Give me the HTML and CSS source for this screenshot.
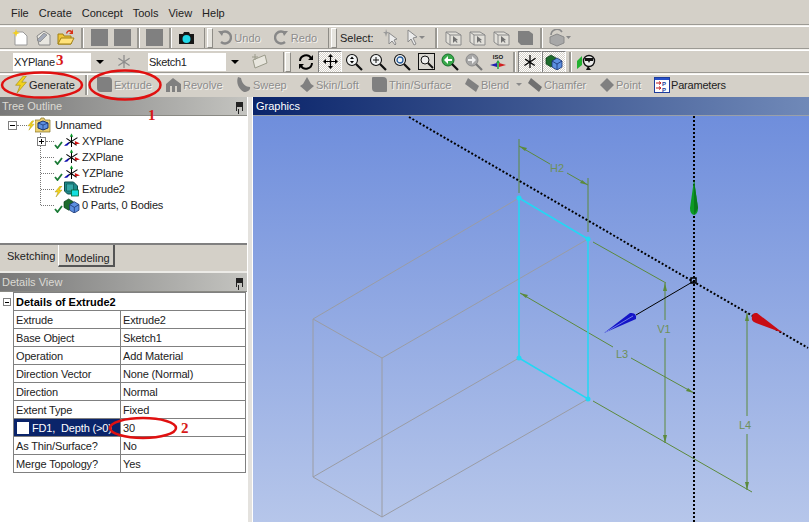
FILE: index.html
```html
<!DOCTYPE html>
<html lang="en">
<head>
<meta charset="utf-8">
<title>DesignModeler</title>
<link rel="stylesheet" href="styles.css">
</head>
<body>
<svg class="defs" width="0" height="0" aria-hidden="true">
  <defs>
    <symbol id="i-axes" viewBox="0 0 20 18">
      <path d="M10 3V16M3 14L17 5M4 6L16 14" stroke="#000" stroke-width="1.2" fill="none"/>
      <path d="M10 0L12 4H8Z" fill="#0a9a2a"/>
      <path d="M14 9L20 12L14 13Z" fill="#d01010"/>
      <path d="M7 10L1 15L6 14Z" fill="#1010c0"/>
    </symbol>
    <symbol id="i-check" viewBox="0 0 9 8">
      <path d="M1 4L3.5 7L8 1" stroke="#1a7a35" stroke-width="1.8" fill="none"/>
    </symbol>
    <symbol id="i-bolt" viewBox="0 0 9 11">
      <path d="M6 0L1 6H4L2 11L8 4H5L8 0Z" fill="#f2d21c" stroke="#a08a10" stroke-width=".4"/>
    </symbol>
    <symbol id="i-cubes" viewBox="0 0 18 16">
      <path d="M1 4L6 1L11 4V10L6 13L1 10Z" fill="#1d6b2c" stroke="#0c3a18" stroke-width=".7"/>
      <path d="M7 7L12 4L17 7V13L12 16L7 13Z" fill="#5c8fe0" stroke="#17306e" stroke-width=".8"/>
      <path d="M7 7L12 10L17 7M12 10V16" stroke="#17306e" stroke-width=".8" fill="none"/>
    </symbol>
    <symbol id="i-extrude" viewBox="0 0 16 16">
      <path d="M1 1H10L14 5V13H4L1 10Z" fill="#1c8a8a" stroke="#0c4a4a"/>
      <path d="M3 3H10V10H3Z" fill="#36a8a8" stroke="#0c4a4a" stroke-width=".6"/>
      <rect x="8" y="9" width="7" height="6" fill="#14e0e0" stroke="#063" stroke-width=".8"/>
    </symbol>
    <symbol id="i-mag" viewBox="0 0 18 18">
      <circle cx="7" cy="7" r="5.5" fill="#f2f4f4" stroke="#111" stroke-width="1.1"/>
      <path d="M11 11L17 17" stroke="#111" stroke-width="2.2"/>
    </symbol>
    <symbol id="box-sel" viewBox="0 0 17 17">
      <path d="M1 3H11L16 6V16H5L1 13Z" fill="#e2e0da" stroke="#8a8a8a"/>
      <path d="M1 3L5 6H16M5 6V16" fill="none" stroke="#8a8a8a"/>
      <path d="M8 7L8 14L10 12L12 14L12.500 13L11 11.500L13 11Z" fill="#707070"/>
    </symbol>
  </defs>
</svg>

<div class="app">
  <nav class="menubar">
    <span class="menu">File</span><span class="menu">Create</span><span class="menu">Concept</span><span class="menu">Tools</span><span class="menu">View</span><span class="menu">Help</span>
  </nav>

  <div class="toolrow row-main">
    <span class="btn"><svg width="16" height="17" viewBox="0 0 16 17"><path d="M3 3H11L15 7V16H3Z" fill="#fff" stroke="#999"/><path d="M4 0L5 3L8 4L5 5L4 8L3 5L0 4L3 3Z" fill="#f4d020"/></svg></span>
    <span class="btn"><svg width="16" height="16" viewBox="0 0 16 16"><path d="M2 6L9 1L15 5V15H4Z" fill="#e8e6e0" stroke="#8a8a8a"/><path d="M2 10L9 3L12 5L5 12Z" fill="#a4aab8" stroke="#777" stroke-width=".6"/></svg></span>
    <span class="btn"><svg width="18" height="17" viewBox="0 0 18 17"><path d="M1 5H6L7 7H14V15H1Z" fill="#f0c638" stroke="#a08014"/><path d="M1 15L4 9H17L14 15Z" fill="#ffe27a" stroke="#a08014"/><path d="M9 4C10 1 13 0 15 2L16 0V5H12L14 3C12 2 11 2 10 5Z" fill="#d83018"/></svg></span>
    <span class="sep w11"></span>
    <span class="btn"><span class="gray-sq"></span></span>
    <span class="btn"><span class="gray-sq"></span></span>
    <span class="sep w9"></span>
    <span class="btn"><span class="gray-sq"></span></span>
    <span class="sep w9"></span>
    <span class="btn"><svg width="17" height="14" viewBox="0 0 17 14"><path d="M1 3H5L6 1H11L12 3H16V13H1Z" fill="#161616"/><circle cx="8.5" cy="8" r="4" fill="#20d8e8"/></svg></span>
    <span class="grip w16"></span>
    <span class="btn w50 dim"><svg width="15" height="15" viewBox="0 0 15 15"><path d="M4 3A6 6 0 1 1 4 12" fill="none" stroke="#888" stroke-width="2.4"/><path d="M1 1L7 1L5 6Z" fill="#888"/></svg><span class="lbl">Undo</span></span>
    <span class="btn w53 ml5 dim"><svg width="15" height="15" viewBox="0 0 15 15"><path d="M11 3A6 6 0 1 0 11 12" fill="none" stroke="#888" stroke-width="2.4"/><path d="M14 1L8 1L10 6Z" fill="#888"/></svg><span class="lbl">Redo</span></span>
    <span class="grip w17"></span>
    <span class="select-label">Select:</span>
    <span class="btn w21"><svg width="16" height="17" viewBox="0 0 16 17"><path d="M6 4L6 15L9 12L12 16L13 15L11 11L14 10Z" fill="#ececec" stroke="#8a8a8a"/><path d="M3 0L4 3L7 3L4 4.500L3 8L2 4.500L0 3L2.500 3Z" fill="#9a9a9a"/></svg></span>
    <span class="btn w30"><svg width="20" height="17" viewBox="0 0 20 17"><path d="M2 1L2 13L5 10L8 16L10 15L7 9L11 8Z" fill="#ececec" stroke="#8a8a8a"/><path d="M13 7H19L16 10Z" fill="#888"/></svg></span>
    <span class="sep w10"></span>
    <span class="btn w24"><svg width="17" height="17" viewBox="0 0 17 17"><use href="#box-sel"/></svg></span>
    <span class="btn w24"><svg width="17" height="17" viewBox="0 0 17 17"><use href="#box-sel"/></svg></span>
    <span class="btn w24"><svg width="17" height="17" viewBox="0 0 17 17"><use href="#box-sel"/></svg></span>
    <span class="btn w24"><svg width="17" height="17" viewBox="0 0 17 17"><path d="M1 2H12L16 5V16H4L1 13Z" fill="#808080"/></svg></span>
    <span class="sep w8"></span>
    <span class="btn w30"><svg width="24" height="18" viewBox="0 0 24 18"><path d="M2 8L9 5L16 8V14L9 17L2 14Z" fill="#a8a8a8" stroke="#8a8a8a"/><path d="M3 6A6 6 0 0 1 14 3" fill="none" stroke="#8a8a8a" stroke-width="1.6"/><path d="M18 7H23L20.500 10Z" fill="#888"/></svg></span>
  </div>

  <div class="toolrow row-view">
    <span class="combo"><span class="combo-text">XYPlane</span><span class="combo-arrow"></span></span>
    <span class="btn w24 ml4 dim"><svg width="16" height="15" viewBox="0 0 20 18"><path d="M10 1V17M3 14L17 5M3 5L17 14" stroke="#8c8c8c" stroke-width="1.6" fill="none"/></svg></span>
    <span class="combo ml12"><span class="combo-text">Sketch1</span><span class="combo-arrow"></span></span>
    <span class="btn w24 ml5"><svg width="16" height="15" viewBox="0 0 16 15"><path d="M1 6L13 1L15 9L3 14Z" fill="#e8e6de" stroke="#9a9a8a"/><path d="M3 0V6M0 3H6" stroke="#9a9a8a"/></svg></span>
    <span class="grip w22"></span>
    <span class="btn w24"><svg width="16" height="16" viewBox="0 0 16 16"><path d="M2 7A6 6 0 0 1 13 4" fill="none" stroke="#000" stroke-width="2"/><path d="M14 9A6 6 0 0 1 3 12" fill="none" stroke="#000" stroke-width="2"/><path d="M15 1V6H10Z M1 15V10H6Z"/></svg></span>
    <span class="btn w24 pressed"><svg width="15" height="15" viewBox="0 0 15 15"><path d="M7.500 2V13M2 7.500H13" stroke="#000" stroke-width="1.200"/><path d="M7.500 0L10 3H5ZM7.500 15L10 12H5ZM0 7.500L3 5V10ZM15 7.500L12 5V10Z"/></svg></span>
    <span class="btn w24"><svg width="18" height="18" viewBox="0 0 18 18"><use href="#i-mag"/><path d="M7 3.500L9 6H5ZM7 10.500L9 8H5Z"/></svg></span>
    <span class="btn w24"><svg width="18" height="18" viewBox="0 0 18 18"><use href="#i-mag"/><path d="M7 4V10M4 7H10" stroke="#111"/></svg></span>
    <span class="btn w24"><svg width="18" height="18" viewBox="0 0 18 18"><use href="#i-mag"/><circle cx="7" cy="7" r="3" fill="none" stroke="#245a9a" stroke-width="1.300"/></svg></span>
    <span class="btn w24"><svg width="17" height="17" viewBox="0 0 17 17"><rect x=".5" y=".5" width="16" height="16" fill="#d8d6d0" stroke="#111"/><circle cx="7" cy="7" r="4" fill="#eee" stroke="#111"/><path d="M10 10L15 15" stroke="#111" stroke-width="1.800"/></svg></span>
    <span class="btn w24"><svg width="18" height="18" viewBox="0 0 18 18"><circle cx="7" cy="7" r="6" fill="#38a84a" stroke="#16702a"/><path d="M11 6H7V3L3 7L7 11V8H11Z" fill="#fff"/><path d="M11 11L17 17" stroke="#111" stroke-width="2.200"/></svg></span>
    <span class="btn w24"><svg width="18" height="18" viewBox="0 0 18 18"><circle cx="7" cy="7" r="6" fill="#a6a6a6" stroke="#8a8a8a"/><path d="M3 6H7V3L11 7L7 11V8H3Z" fill="#eee"/><path d="M11 11L17 17" stroke="#777" stroke-width="2.200"/></svg></span>
    <span class="btn w24"><svg width="18" height="18" viewBox="0 0 18 18"><text x="9" y="6" class="iso">ISO</text><path d="M9 8V16" stroke="#20a040" stroke-width="1.500"/><path d="M1 12L8 10L8 14Z" fill="#2020b0"/><path d="M17 12L10 10L10 14Z" fill="#d02020"/><path d="M9 7L11 10H7Z" fill="#20a040"/></svg></span>
    <span class="sep w8"></span>
    <span class="btn w24 pressed"><svg width="16" height="15" viewBox="0 0 20 18"><path d="M10 1V17M3 14L17 5M4 6L16 14" stroke="#000" stroke-width="1.600" fill="none"/></svg></span>
    <span class="btn w24 pressed"><svg width="18" height="16" viewBox="0 0 18 16"><use href="#i-cubes"/></svg></span>
    <span class="sep w8"></span>
    <span class="btn w24"><svg width="19" height="16" viewBox="0 0 19 16"><path d="M0 7L5 2V11L0 15Z" fill="#22b030"/><circle cx="12" cy="7" r="5.500" fill="#eee" stroke="#111" stroke-width="1.400"/><path d="M8 4H16V7H13L12 9L11 7H8ZM11 12L14 16H9Z" fill="#111"/></svg></span>
  </div>

  <div class="toolrow row-feat">
    <span class="feat f62"><svg width="14" height="17" viewBox="0 0 9 11"><use href="#i-bolt"/></svg><span class="lbl-on">Generate</span></span>
    <span class="sep w21"></span>
    <span class="feat f69 dim"><span class="fi fi-sq"></span><span class="lbl">Extrude</span></span>
    <span class="feat f70 dim"><svg width="15" height="15" viewBox="0 0 15 15"><path d="M0 7L7 1L15 7V15H11V9H9V15H6V9H4V15H0Z" fill="#808080"/></svg><span class="lbl">Revolve</span></span>
    <span class="feat f64 dim"><svg width="15" height="15" viewBox="0 0 15 15"><path d="M2 0C0 5 2 12 8 15C11 15 15 13 14 10C10 10 6 7 5 1Z" fill="#808080"/></svg><span class="lbl">Sweep</span></span>
    <span class="feat f72 dim"><svg width="14" height="15" viewBox="0 0 14 15"><path d="M7 0L11 7L14 9L7 15L0 9L3 7Z" fill="#808080"/></svg><span class="lbl">Skin/Loft</span></span>
    <span class="feat f93 dim"><span class="fi fi-sq"></span><span class="lbl">Thin/Surface</span></span>
    <span class="feat f63 dim"><svg width="14" height="14" viewBox="0 0 14 14"><path d="M3 0L14 8L11 14L0 6Z" fill="#808080"/></svg><span class="lbl">Blend</span><span class="mini-arrow"></span></span>
    <span class="feat f72 dim"><svg width="14" height="14" viewBox="0 0 14 14"><path d="M3 0L14 9L11 14L0 5Z" fill="#707070"/></svg><span class="lbl">Chamfer</span></span>
    <span class="feat f54 dim"><svg width="14" height="14" viewBox="0 0 14 14"><path d="M7 0L14 7L7 14L0 7Z" fill="#808080"/></svg><span class="lbl">Point</span></span>
    <span class="feat"><svg width="16" height="16" viewBox="0 0 16 16"><rect x=".5" y=".5" width="15" height="15" fill="#fff" stroke="#1c3c9c"/><rect x="1" y="1" width="14" height="2" fill="#2850c8"/><path d="M2 6H6M5 4.500L7 6L5 7.500M2 11H6M5 9.500L7 11L5 12.500" fill="none" stroke="#c01818"/><text x="8" y="8.500" class="pp">P</text><text x="8" y="15" class="pp">P</text></svg><span class="lbl-on tight">Parameters</span></span>
  </div>

  <main class="work">
    <aside class="left">
      <header class="pane-head"><span>Tree Outline</span><span class="pin"></span></header>
      <div class="tree">
        <div class="node root">
          <span class="box"></span><span class="dots d-root"></span>
          <svg width="8" height="11" viewBox="0 0 9 11"><use href="#i-bolt"/></svg>
          <svg width="16" height="16" viewBox="0 0 16 16"><path d="M0 3H5L6 1H9L10 3H15V15H0Z" fill="#ecd070" stroke="#857020" stroke-width=".7"/><path d="M3 6L8 4L13 6V11L8 13L3 11Z" fill="#5c8fe0" stroke="#17306e"/><path d="M3 6L8 8L13 6M8 8V13" stroke="#17306e" fill="none" stroke-width=".7"/></svg>
          <span class="node-text">Unnamed</span>
        </div>
        <div class="children">
          <div class="node">
            <span class="box plus"></span><span class="dots d-child"></span>
            <svg class="status" width="9" height="8" viewBox="0 0 9 8"><use href="#i-check"/></svg><svg width="17" height="16" viewBox="0 0 20 18"><use href="#i-axes"/></svg>
            <span class="node-text">XYPlane</span>
          </div>
          <div class="node">
            <span class="dots d-long"></span>
            <svg class="status" width="9" height="8" viewBox="0 0 9 8"><use href="#i-check"/></svg><svg width="17" height="16" viewBox="0 0 20 18"><use href="#i-axes"/></svg>
            <span class="node-text">ZXPlane</span>
          </div>
          <div class="node">
            <span class="dots d-long"></span>
            <svg class="status" width="9" height="8" viewBox="0 0 9 8"><use href="#i-check"/></svg><svg width="17" height="16" viewBox="0 0 20 18"><use href="#i-axes"/></svg>
            <span class="node-text">YZPlane</span>
          </div>
          <div class="node">
            <span class="dots d-long"></span>
            <svg class="status" width="9" height="11" viewBox="0 0 9 11"><use href="#i-bolt"/></svg><svg width="17" height="16" viewBox="0 0 16 16"><use href="#i-extrude"/></svg>
            <span class="node-text">Extrude2</span>
          </div>
          <div class="node">
            <span class="dots d-long"></span>
            <svg class="status" width="9" height="8" viewBox="0 0 9 8"><use href="#i-check"/></svg><svg width="17" height="15" viewBox="0 0 18 16"><use href="#i-cubes"/></svg>
            <span class="node-text">0 Parts, 0 Bodies</span>
          </div>
        </div>
      </div>
      <div class="tabs">
        <span class="tab">Sketching</span>
        <span class="tab active">Modeling</span>
      </div>
      <header class="pane-head"><span>Details View</span><span class="pin"></span></header>
      <div class="details">
        <span class="gutter"><span class="box"></span></span>
        <table class="grid">
          <colgroup><col class="col-a"><col class="col-b"></colgroup>
          <tr><th colspan="2">Details of Extrude2</th></tr>
          <tr><td>Extrude</td><td>Extrude2</td></tr>
          <tr><td>Base Object</td><td>Sketch1</td></tr>
          <tr><td>Operation</td><td>Add Material</td></tr>
          <tr><td>Direction Vector</td><td>None (Normal)</td></tr>
          <tr><td>Direction</td><td>Normal</td></tr>
          <tr><td>Extent Type</td><td>Fixed</td></tr>
          <tr><td class="sel"><span class="chk"></span>FD1, &nbsp;Depth (&gt;0)</td><td>30</td></tr>
          <tr><td>As Thin/Surface?</td><td>No</td></tr>
          <tr><td>Merge Topology?</td><td>Yes</td></tr>
        </table>
      </div>
    </aside>
    <div class="sash"></div>
    <section class="graphics">
      <header class="gfx-head">Graphics</header>
      <svg class="canvas" viewBox="253 116 556 406" width="556" height="406">
        <defs>
          <linearGradient id="sky" x1="0" y1="0" x2="0" y2="1"><stop offset="0" stop-color="#6f8edc"/><stop offset="1" stop-color="#b6c6ea"/></linearGradient>
        </defs>
        <rect x="253" y="116" width="556" height="406" fill="url(#sky)"/>
        <g class="solid">
          <path d="M313 319L382 358V517L313 477Z"/>
          <path d="M313 319L519 198M382 358L588 239M313 477L519 358M382 517L588 399"/>
        </g>
        <g class="dim-line">
          <path d="M519 139V193M588 178V232M519 146L550 164M567 173L588 185"/>
          <path d="M593 242L666 283M520 293L613 347M631 358L694 393"/>
          <path d="M665 283V320M665 338V443M593 401L752 492M747 313V416M747 434V490"/>
          <path class="dim-head" d="M519 146L527 148L525 151ZM588 185L580 183L582 180ZM520 293L528 295L526 298ZM694 393L686 391L688 388ZM665 283L667 291H663ZM665 443L667 435H663ZM747 313L749 321H745ZM747 490L749 482H745Z"/>
        </g>
        <text class="dim-text" x="557" y="172">H2</text>
        <text class="dim-text" x="622" y="358">L3</text>
        <text class="dim-text" x="664" y="333">V1</text>
        <text class="dim-text" x="745" y="429">L4</text>
        <path class="dotted" d="M409 117L808 348"/>
        <path class="dotted" d="M694 116V522"/>
        <path class="axis" d="M694 281L636 315"/>
        <g class="sketch">
          <path d="M519 198L588 239V399L519 358Z"/>
          <circle cx="519" cy="198" r="2.500"/><circle cx="588" cy="239" r="2.500"/><circle cx="519" cy="358" r="2.500"/><circle cx="588" cy="399" r="2.500"/>
        </g>
        <rect class="origin" x="691" y="278" width="5" height="5"/>
        <path d="M694 180L690 208Q690 214 694 215Q698 214 698 208Z" fill="#0c9a24"/>
        <path d="M694 180L694 215L698 208Z" fill="#0a7a1c"/>
        <path d="M604 333L630 313Q637 312 636 319Z" fill="#1414c8"/>
        <path d="M606 332L633 316" stroke="#8a9af0" stroke-width=".8"/>
        <path d="M783 333L757 313Q751 312 752 320Q753 322 756 323Z" fill="#c80c14"/>
      </svg>
    </section>
  </main>
</div>

<svg class="notes" viewBox="0 0 809 522" width="809" height="522">
  <ellipse cx="42" cy="85" rx="40" ry="12.500"/>
  <ellipse cx="125" cy="85" rx="35.500" ry="14.500"/>
  <ellipse cx="143" cy="428" rx="33" ry="10"/>
  <text x="56" y="65">3</text>
  <text x="148" y="120">1</text>
  <text x="181" y="433">2</text>
</svg>
</body>
</html>
```
FILE: styles.css
```css
* { box-sizing: border-box; }
html, body { margin: 0; padding: 0; }
body {
  width: 809px;
  height: 522px;
  overflow: hidden;
  position: relative;
  background: #d4d0c8;
  font-family: "Liberation Sans", Arial, sans-serif;
  font-size: 11px;
  color: #222;
}
.defs { position: absolute; }
.app { display: flex; flex-direction: column; height: 522px; }

.menubar { display: flex; align-items: center; height: 25px; padding-left: 11px; gap: 10px; }

.toolrow {
  display: flex;
  align-items: center;
  height: 24px;
  border-top: 1px solid #f4f2ee;
  box-shadow: inset 0 1px 0 #fff, 0 -1px 0 #9c9a94;
}
.row-main { padding-left: 8px; }
.row-view { padding-left: 13px; }
.row-feat { padding: 0 0 2px 14px; }

.btn { display: flex; align-items: center; justify-content: center; width: 23px; height: 22px; flex: none; }
.btn.w21 { width: 21px; }
.btn.w24 { width: 24px; }
.btn.w30 { width: 30px; }
.btn.w50 { width: 50px; }
.btn.w53 { width: 53px; }
.ml4 { margin-left: 4px; }
.ml5 { margin-left: 5px; }
.ml12 { margin-left: 12px; }

.pressed {
  background: repeating-conic-gradient(#fff 0 25%, #d4d0c8 0 50%) 0 0 / 2px 2px;
  border: 1px solid;
  border-color: #808080 #fff #fff #808080;
}

.sep { display: flex; justify-content: center; height: 20px; flex: none; }
.sep::before { content: ""; width: 2px; background: #9a9892; border-right: 1px solid #fff; }
.sep.w8 { width: 8px; }
.sep.w9 { width: 9px; }
.sep.w10 { width: 10px; }
.sep.w11 { width: 11px; }
.sep.w21 { width: 21px; }

.grip { display: block; height: 22px; flex: none; position: relative; }
.grip::before, .grip::after { content: ""; position: absolute; top: 1px; bottom: 1px; }
.grip::before { left: 6px; width: 1px; background: #8e8c86; }
.grip::after { left: 9px; width: 4px; background: #e6e4de; border: 1px solid; border-color: #fff #8e8c86 #8e8c86 #fff; }
.grip.w16 { width: 16px; }
.grip.w17 { width: 17px; }
.grip.w22 { width: 22px; }
.grip.w22::before { left: 11px; }
.grip.w22::after { left: 13px; }

.gray-sq { display: block; width: 17px; height: 17px; background: #808080; }
.select-label { width: 41px; padding-left: 1px; flex: none; }
.lbl { margin-left: 2px; color: #8c8c8c; text-shadow: 1px 1px 0 #f4f2ee; }
.lbl-on { margin-left: 1px; }
.lbl-on.tight { margin-left: 1px; letter-spacing: -.2px; }

.combo { display: flex; width: 95px; height: 18px; background: #fff; flex: none; align-items: center; }
.combo-text { flex: 1; padding-left: 1px; letter-spacing: -.3px; }
.combo-arrow { position: relative; width: 17px; height: 18px; background: #d4d0c8; }
.combo-arrow::after {
  content: ""; position: absolute; left: 5px; top: 7px;
  border: 4px solid transparent; border-top-color: #000; border-bottom: 0;
}

.feat { display: flex; align-items: center; flex: none; }
.f54 { width: 54px; }
.f62 { width: 62px; }
.f63 { width: 63px; }
.f64 { width: 64px; }
.f69 { width: 69px; }
.f70 { width: 70px; }
.f72 { width: 72px; }
.f93 { width: 93px; }
.fi-sq { display: block; width: 15px; height: 15px; background: #808080; border-radius: 1px 4px 1px 4px; }
.mini-arrow { margin-left: 7px; border: 3px solid transparent; border-top-color: #8a8a8a; border-bottom: 0; }
.iso { font: bold 6px "Liberation Sans", sans-serif; text-anchor: middle; fill: #111; }
.pp { font: bold 6px "Liberation Sans", sans-serif; fill: #1c3c9c; }

.work { display: flex; flex: 1; min-height: 0; }
.left { width: 247px; display: flex; flex-direction: column; flex: none; }
.sash { width: 6px; background: #e4e2de; border-left: 1px solid #fff; border-right: 1px solid #fff; flex: none; }
.graphics { flex: 1; display: flex; flex-direction: column; min-width: 0; }
.gfx-head {
  height: 19px;
  display: flex;
  align-items: center;
  padding-left: 3px;
  color: #fff;
  background: linear-gradient(90deg, #0a246a, #7089b8);
  border-bottom: 1px solid #9aa0a8;
}
.canvas { display: block; }
.solid path { fill: none; stroke: #9a9ca4; stroke-width: 1; }
.dim-line path { fill: none; stroke: #5c8a3c; stroke-width: 1; }
.dim-line .dim-head { fill: #5c8a3c; stroke: none; }
.dim-text { font-size: 11px; fill: #6e9058; text-anchor: middle; }
.dotted { fill: none; stroke: #000; stroke-width: 2; stroke-dasharray: 2 2; }
.axis { stroke: #000; fill: none; }
.sketch path { fill: none; stroke: #22d8f4; stroke-width: 1.500; }
.sketch circle { fill: #22d8f4; }
.origin { fill: none; stroke: #000; stroke-width: 1.500; }

.pane-head {
  height: 19px;
  display: flex;
  align-items: center;
  justify-content: space-between;
  padding: 0 4px 0 2px;
  color: #dcdad4;
  background: linear-gradient(90deg, #787878, #c4c4c0);
  border-bottom: 1px solid #8a8a84;
  flex: none;
}
.pin { position: relative; display: block; width: 7px; height: 9px; border-top: 5px solid #222; border-left: 1px solid #222; border-right: 1px solid #222; }
.pin::after { content: ""; position: absolute; left: 1px; top: 2px; width: 1px; height: 5px; background: #222; }

.tree { height: 127px; background: #fff; padding-top: 1px; flex: none; }
.node { display: flex; align-items: center; height: 16px; }
.root { padding-left: 8px; }
.box {
  display: block; position: relative; width: 9px; height: 9px; flex: none;
  border: 1px solid #808080; background: #fff;
}
.box::before { content: ""; position: absolute; left: 1px; right: 1px; top: 3px; height: 1px; background: #000; }
.box.plus { margin-left: -4px; }
.box.plus::after { content: ""; position: absolute; top: 1px; bottom: 1px; left: 3px; width: 1px; background: #000; }
.dots { display: block; border-top: 1px dotted #777; flex: none; }
.d-root { width: 10px; }
.d-child { width: 8px; }
.d-long { width: 13px; }
.status { align-self: flex-end; flex: none; }
.node-text { margin-left: 2px; letter-spacing: -.15px; }
.root .node-text { margin-left: 4px; }
.children { margin-left: 40px; border-left: 1px dotted #777; height: 72px; }

.tabs {
  display: flex;
  height: 30px;
  padding: 0 0 6px 1px;
  border-top: 2px solid #808080;
  background: #d4d0c8;
  align-items: stretch;
  box-shadow: inset 0 -2px 0 #ecebe7;
  flex: none;
}
.tab { width: 57px; padding: 5px 0 0 6px; flex: none; }
.tab.active {
  padding: 7px 0 0 6px;
  background: #d4d0c8;
  border-left: 1px solid #fff;
  border-right: 2px solid #555;
  border-bottom: 2px solid #555;
}
.details { display: flex; flex: 1; background: #fff; }
.gutter { width: 13px; padding: 6px 0 0 3px; flex: none; }
.gutter .box { width: 8px; height: 8px; }
.grid { border-collapse: collapse; width: 232px; height: 180px; table-layout: fixed; align-self: flex-start; }
.col-a { width: 107px; }
.col-b { width: 125px; }
.grid th, .grid td {
  border: 1px solid #808080;
  height: 18px;
  padding: 0 0 0 2px;
  text-align: left;
  font-size: 11px;
  letter-spacing: -.15px;
  white-space: nowrap;
  overflow: hidden;
}
.grid th { font-weight: bold; color: #000; letter-spacing: 0; }
.grid td.sel { background: #0a246a; color: #fff; padding-left: 3px; }
.chk { display: inline-block; width: 12px; height: 12px; margin-right: 3px; background: #fff; vertical-align: -2px; }

.notes { position: absolute; left: 0; top: 0; pointer-events: none; }
.notes ellipse { fill: none; stroke: #e01010; stroke-width: 2.500; }
.notes text { font: bold 15px "Liberation Serif", serif; fill: #d81818; }
```
